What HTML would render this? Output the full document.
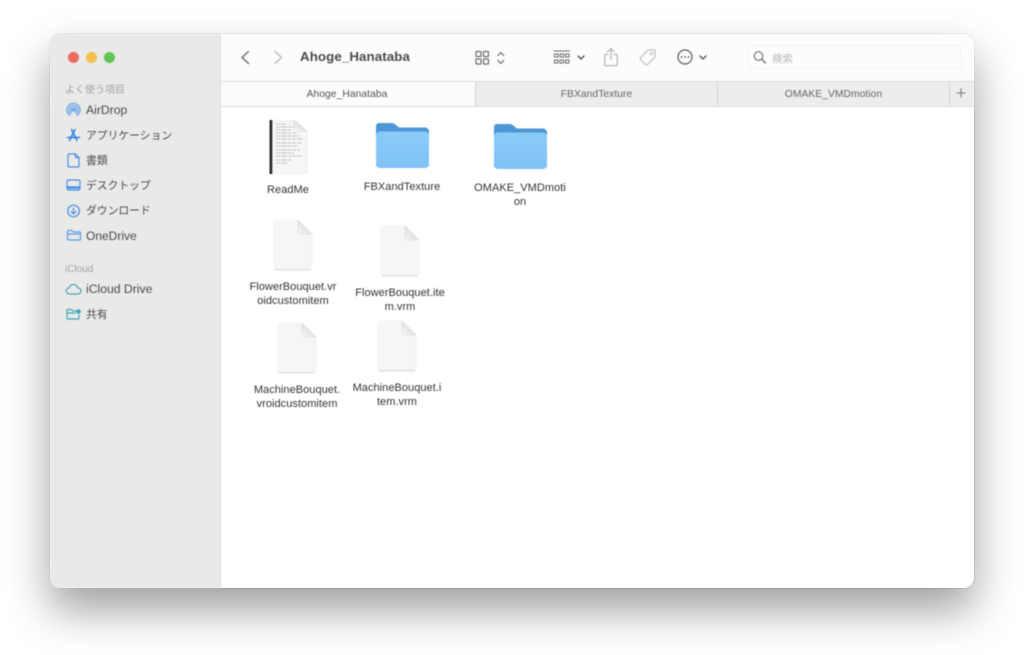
<!DOCTYPE html>
<html><head><meta charset="utf-8">
<style>
html,body{margin:0;padding:0;width:1024px;height:655px;overflow:hidden;background:#fff;font-family:"Liberation Sans","Noto Sans CJK JP",sans-serif;}
#win{position:absolute;left:50px;top:34px;width:924px;height:554px;border-radius:10px;background:#fff;box-shadow:0 0 0 .5px rgba(0,0,0,.16),0 22px 44px rgba(0,0,0,.38);}
#clip{position:absolute;inset:0;border-radius:10px;overflow:hidden;filter:blur(.4px);}
.a{position:absolute;white-space:nowrap;}
#side{left:0;top:0;width:170px;height:554px;background:#e9e9e8;border-right:1px solid #dedede;box-sizing:content-box;}
#tool{left:171px;top:0;width:753px;height:47px;background:#fcfcfb;border-bottom:1px solid #dcdcdb;}
.tab{top:48px;height:24px;background:#ededec;border-right:1px solid #d2d2d2;border-bottom:1px solid #dcdcdc;font-size:10.3px;line-height:25px;text-align:center;color:#666;letter-spacing:.05px;}
.h{font-size:10px;color:#a3a3a3;left:15px;}
.s{font-size:12.2px;color:#4a4a4a;left:36px;line-height:16px;}
.j{font-size:10.800px;}
.i{position:absolute;overflow:visible;}
.l{position:absolute;font-size:11px;line-height:14px;color:#333;text-align:center;white-space:nowrap;letter-spacing:.05px;}
</style></head><body>
<div id="win"><div id="clip">
<div class="a" id="side"></div>
<div class="a" style="left:18px;top:18px;width:11px;height:11px;border-radius:50%;background:#ec6a5e"></div>
<div class="a" style="left:36px;top:18px;width:11px;height:11px;border-radius:50%;background:#f4bf4f"></div>
<div class="a" style="left:54px;top:18px;width:11px;height:11px;border-radius:50%;background:#61c554"></div>

<div class="a h" style="top:47px">よく使う項目</div>
<div class="a s" style="top:68px">AirDrop</div>
<div class="a s j" style="top:93.500px">アプリケーション</div>
<div class="a s j" style="top:119px">書類</div>
<div class="a s j" style="top:144px">デスクトップ</div>
<div class="a s j" style="top:169px">ダウンロード</div>
<div class="a s" style="top:193.500px;font-size:12px">OneDrive</div>
<div class="a h" style="top:230px">iCloud</div>
<div class="a s" style="top:247px">iCloud Drive</div>
<div class="a s j" style="top:273px">共有</div>

<svg class="i" style="left:0;top:0" width="170" height="300" fill="none" stroke="#3b82e0" stroke-width="1.2" stroke-linecap="round" stroke-linejoin="round">
<g stroke="#5a9ce8">
<path d="M19.800 81.300A6.500 6.500 0 1 1 27.200 81.300"/><path d="M21 79.500A4.300 4.300 0 1 1 26 79.500"/><path d="M22.200 77.800A2.200 2.200 0 1 1 24.800 77.800"/><circle cx="23.500" cy="76" r=".6"/>
</g>
<path d="M21.500 95.500l5.500 11M25 95.500L19.500 106.500M17.500 103.500h12" stroke="#2f7fe0" stroke-width="1.500"/>
<path d="M19 120h6.500l3.500 3.500v8.500a1 1 0 0 1-1 1h-9a1 1 0 0 1-1-1v-11a1 1 0 0 1 1-1zM25.500 120v3.500h3.500" stroke="#4a8fe3"/>
<rect x="17" y="146" width="13" height="10" rx="1.500" stroke="#4a8fe3"/><path d="M18 153.500h11" stroke="#4a8fe3" stroke-width="2.500"/>
<circle cx="23.500" cy="177" r="5.800" stroke="#4a8fe3"/><path d="M23.500 174v5.500M21 177.500l2.500 2.500 2.500-2.500" stroke="#4a8fe3"/>
<path d="M17.500 197.500a1 1 0 0 1 1-1h3.500l1.500 1.500h6a1 1 0 0 1 1 1v6a1 1 0 0 1-1 1h-11a1 1 0 0 1-1-1zM17.500 200h13" stroke="#5b9be6"/>
<path d="M20 260c-2.200 0-3.700-1.300-3.700-3.100 0-1.700 1.300-2.900 2.900-3 .6-2.200 2.300-3.400 4.300-3.400 2.300 0 4 1.500 4.400 3.500 1.800.1 3.100 1.300 3.100 2.900 0 1.800-1.400 3.100-3.400 3.100z" stroke="#4ba3b5"/>
<path d="M17 276.500a1 1 0 0 1 1-1h3.500l1.500 1.500h3M17 279h8M17 276.500v7.500a1 1 0 0 0 1 1h10a1 1 0 0 0 1-1v-3" stroke="#3fa7b8"/>
<circle cx="28.500" cy="277.500" r="2.300" fill="#3fa7b8" stroke="none"/>
</svg>

<div class="a" id="tool"></div>
<div class="a" style="left:250px;top:14px;font-size:13.300px;font-weight:bold;color:#4a4a4a;line-height:18px;letter-spacing:.1px">Ahoge_Hanataba</div>
<svg class="i" style="left:171px;top:0" width="753" height="48" fill="none" stroke="#6b6b6b" stroke-width="1.200" stroke-linecap="round" stroke-linejoin="round">
<path d="M27.500 17.500l-6.500 6 6.500 6" stroke-width="1.400"/>
<path d="M54 17.500l6.500 6-6.500 6" stroke="#b9b9b9" stroke-width="1.400"/>
<rect x="255" y="17.500" width="5" height="5" rx=".8"/><rect x="262.500" y="17.500" width="5" height="5" rx=".8"/><rect x="255" y="25" width="5" height="5" rx=".8"/><rect x="262.500" y="25" width="5" height="5" rx=".8"/>
<path d="M277 21.500l2.800-3 2.800 3M277 26.500l2.800 3 2.800-3"/>
<path d="M333 17h15.500" stroke-width="1"/>
<g stroke-width="1"><rect x="333.500" y="20" width="3.500" height="3"/><rect x="339" y="20" width="3.500" height="3"/><rect x="344.500" y="20" width="3.500" height="3"/><rect x="333.500" y="26" width="3.500" height="3"/><rect x="339" y="26" width="3.500" height="3"/><rect x="344.500" y="26" width="3.500" height="3"/></g>
<path d="M357 22l3 3 3-3" stroke="#555" stroke-width="1.400"/>
<path d="M387 20.500h-2.500a.8.800 0 0 0-.8.800v9.500a.8.800 0 0 0 .8.800h11a.8.800 0 0 0 .8-.800v-9.500a.8.800 0 0 0-.8-.800H393M390 25.500V15M386.500 18l3.500-3.500 3.500 3.500" stroke="#b5b5b5"/>
<path d="M421.500 22.500l7-7h7v7l-7.500 7.500a1.400 1.400 0 0 1-2 0l-4.500-4.500a1.400 1.400 0 0 1 0-2.500z" stroke="#bcbcbc" transform="translate(-1.500,.5)"/>
<circle cx="430.500" cy="19.500" r="1.200" stroke="#bcbcbc" stroke-width=".9"/>
<circle cx="464" cy="23" r="7" stroke="#5c5c5c"/>
<path d="M460.500 23h.1M464 23h.1M467.500 23h.1" stroke="#5c5c5c" stroke-width="1.700"/>
<path d="M479 22l3 3 3-3" stroke="#555" stroke-width="1.400"/>
</svg>
<div class="a" style="left:698px;top:11px;width:214px;height:24px;box-sizing:border-box;border:1px solid #f0f0ef;border-radius:5px;background:#fcfcfb"></div>
<svg class="i" style="left:702px;top:16px" width="16" height="16" fill="none" stroke="#6a6a6a" stroke-width="1.100" stroke-linecap="round"><circle cx="6.500" cy="6" r="4.300"/><path d="M9.700 9.200l3.800 3.800" stroke-width="1.300"/></svg>
<div class="a" style="left:722px;top:18px;font-size:10.500px;line-height:14px;color:#b9b9b9">検索</div>

<div class="a tab" style="left:171px;top:48px;width:252px;padding-right:2px;background:#fcfcfb;border-right:none;color:#555">Ahoge_Hanataba</div>
<div class="a tab" style="left:425px;width:241px;border-left:1px solid #d2d2d2">FBXandTexture</div>
<div class="a tab" style="left:668px;width:231px">OMAKE_VMDmotion</div>
<div class="a tab" style="left:900px;width:24px;border-right:none"></div>
<svg class="i" style="left:904px;top:52px" width="14" height="14" stroke="#7b7b7b" stroke-width="1.100"><path d="M7 2.500v9M2.500 7h9"/></svg>

<!-- ReadMe -->
<svg class="i" style="left:218px;top:85px" width="42" height="58">
<defs>
<linearGradient id="c" x1="0" y1="1" x2="1" y2="0"><stop offset="0" stop-color="#fafafa"/><stop offset="1" stop-color="#c9c9c9"/></linearGradient>
<linearGradient id="f" x1="0" y1="0" x2="0" y2="1"><stop offset="0" stop-color="#8acbf9"/><stop offset="1" stop-color="#7fc2f5"/></linearGradient>
</defs>
<path d="M2 1.500h26l11 11v41a1 1 0 0 1-1 1H2z" fill="#f6f6f6" stroke="#e4e4e4" stroke-width=".6"/>
<rect x="1.500" y="1" width="2.800" height="54" fill="#2b2b2b"/>
<g stroke="#b0b0b0" stroke-width=".8" stroke-dasharray="4 1 6 1 3 1">
<path d="M8 5h10M8 8h18M8 11h16M8 14h20M8 17h24M8 20h28M8 24h26M8 27h22M8 31h24M8 34h18M8 37h26M8 41h16M8 44h12"/>
</g>
<path d="M26 1.500l13 11h-10a3 3 0 0 1-3-3z" fill="url(#c)" stroke="#d4d4d4" stroke-width=".5"/>
</svg>
<div class="l" style="left:188px;top:149px;width:100px">ReadMe</div>

<!-- Folders -->
<svg class="i" style="left:325px;top:88px" width="56" height="48">
<path d="M1 44V4a3 3 0 0 1 3-3h12c2.500 0 3 .5 5 2l3 2.500h26a4 4 0 0 1 4 4V44z" fill="#4c97d5"/>
<path d="M1 14a4 4 0 0 1 4-4.500h45a4 4 0 0 1 4 4.500v28a4 4 0 0 1-4 4H5a4 4 0 0 1-4-4z" fill="url(#f)"/>
</svg>
<div class="l" style="left:302px;top:146px;width:100px">FBXandTexture</div>
<svg class="i" style="left:443px;top:89px" width="56" height="48">
<path d="M1 44V4a3 3 0 0 1 3-3h12c2.500 0 3 .5 5 2l3 2.500h26a4 4 0 0 1 4 4V44z" fill="#4c97d5"/>
<path d="M1 14a4 4 0 0 1 4-4.500h45a4 4 0 0 1 4 4.500v28a4 4 0 0 1-4 4H5a4 4 0 0 1-4-4z" fill="url(#f)"/>
</svg>
<div class="l" style="left:420px;top:147px;width:100px">OMAKE_VMDmoti<br>on</div>

<!-- Docs -->
<svg class="i" style="left:223px;top:185px" width="42" height="54"><use href="#doc"/></svg>
<svg class="i" style="left:330px;top:191px" width="42" height="54">
<g id="doc">
<path d="M1 3a2 2 0 0 1 2-2h22l14 14v34a2 2 0 0 1-2 2H3a2 2 0 0 1-2-2z" fill="#f6f6f6" stroke="#efefef" stroke-width=".6"/>
<path d="M1.500 50.700h36" stroke="#d6d6d6" stroke-width="1"/>
<path d="M25 1l14 14H28a3 3 0 0 1-3-3z" fill="url(#c)" stroke="#d2d2d2" stroke-width=".5"/>
</g></svg>
<svg class="i" style="left:227px;top:288px" width="42" height="54"><use href="#doc"/></svg>
<svg class="i" style="left:327px;top:286px" width="42" height="54"><use href="#doc"/></svg>

<div class="l" style="left:193px;top:246px;width:100px">FlowerBouquet.vr<br>oidcustomitem</div>
<div class="l" style="left:300px;top:252px;width:100px">FlowerBouquet.ite<br>m.vrm</div>
<div class="l" style="left:197px;top:349px;width:100px">MachineBouquet.<br>vroidcustomitem</div>
<div class="l" style="left:297px;top:347px;width:100px">MachineBouquet.i<br>tem.vrm</div>
</div></div>
</body></html>
